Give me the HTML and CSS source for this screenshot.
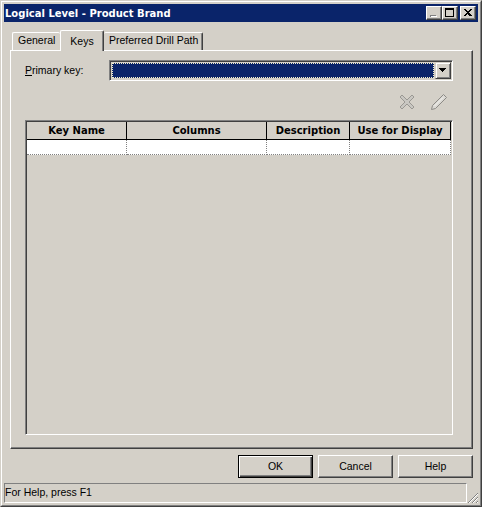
FILE: index.html
```html
<!DOCTYPE html>
<html lang="en">
<head>
    <meta charset="UTF-8">
    <title>Logical Level - Product Brand</title>
    <link rel="stylesheet" href="styles.css">
</head>
<body>
    <div class="window">
        <div class="window-inner">
            <div class="titlebar">
                <span class="title">Logical Level - Product Brand</span>
                <div class="title-buttons">
                    <div class="title-btn">
                        <svg width="14" height="12" viewBox="0 0 14 12" shape-rendering="crispEdges"><rect x="3" y="8" width="6" height="2" fill="#808080"/><rect x="4" y="9" width="6" height="1" fill="#fff"/></svg>
                    </div>
                    <div class="title-btn">
                        <svg width="14" height="12" viewBox="0 0 14 12" shape-rendering="crispEdges"><path d="M2 1h9v9H2z M3 3v6h7V3z" fill="#000" fill-rule="evenodd"/></svg>
                    </div>
                    <div class="title-btn close-btn">
                        <svg width="14" height="12" viewBox="0 0 14 12" shape-rendering="crispEdges"><path d="M3 2h2v1h1v1h2V3h1V2h2v1h-1v1H9v1H8v1h1v1h1v1h1v1H9V9H8V8H7V7H6v1H5v1H3V8h1V7h1V6h1V5H5V4H4V3H3z" fill="#000"/></svg>
                    </div>
                </div>
            </div>

            <div class="content">
                <div class="tabs">
                    <div class="tab">General</div>
                    <div class="tab active">Keys</div>
                    <div class="tab">Preferred Drill Path</div>
                </div>

                <div class="panel">
                    <div class="key-row">
                        <label class="key-label"><u>P</u>rimary key:</label>
                        <div class="combo">
                            <div class="combo-value"></div>
                            <div class="combo-arrow">
                                <svg width="9" height="5" viewBox="0 0 9 5" shape-rendering="crispEdges"><path d="M0 0h7v1H6v1H5v1H4v1H3V3H2V2H1V1H0z" fill="#000"/></svg>
                            </div>
                        </div>
                    </div>

                    <div class="toolbar">
                        <svg class="tool-icon" width="18" height="18" viewBox="0 0 18 18">
                            <path d="M2 4 L4 2 L9 7 L14 2 L16 4 L11 9 L16 14 L14 16 L9 11 L4 16 L2 14 L7 9 Z" fill="#c9c7c2" stroke="#9a9893" stroke-width="1"/>
                        </svg>
                        <svg class="tool-icon" width="18" height="18" viewBox="0 0 18 18">
                            <path d="M13.5 1.5 L16.5 4.5 L5.5 15.5 L1.5 16.5 L2.5 12.5 Z" fill="#dbd9d4" stroke="#8c8a86" stroke-width="1"/>
                            <path d="M13 4.5 L4.5 13" stroke="#f4f3f0" stroke-width="1"/>
                        </svg>
                    </div>

                    <div class="grid-box">
                        <table class="grid">
                            <thead>
                                <tr>
                                    <th class="col-name">Key Name</th>
                                    <th class="col-columns">Columns</th>
                                    <th class="col-desc">Description</th>
                                    <th class="col-display">Use for Display</th>
                                </tr>
                            </thead>
                            <tbody>
                                <tr>
                                    <td></td>
                                    <td></td>
                                    <td></td>
                                    <td></td>
                                </tr>
                            </tbody>
                        </table>
                    </div>
                </div>

                <div class="buttons">
                    <button class="btn default">OK</button>
                    <button class="btn">Cancel</button>
                    <button class="btn">Help</button>
                </div>
            </div>

            <div class="statusbar">
                <div class="status-text">For Help, press F1</div>
                <svg class="grip" width="11" height="11" viewBox="0 0 11 11">
                    <path d="M1 11 L11 1 M5 11 L11 5 M9 11 L11 9" stroke="#808080" stroke-width="1" fill="none"/>
                    <path d="M2 11 L11 2 M6 11 L11 6 M10 11 L11 10" stroke="#fff" stroke-width="1" fill="none"/>
                </svg>
            </div>
        </div>
    </div>
</body>
</html>
```

FILE: styles.css
```css
html, body {
    margin: 0;
    padding: 0;
}

body {
    width: 482px;
    height: 507px;
    overflow: hidden;
    background: #d4d0c8;
    font-family: "Liberation Sans", Arial, sans-serif;
    font-size: 10.5px;
    color: #000;
}

.window {
    box-sizing: border-box;
    width: 482px;
    height: 507px;
    border: 1px solid;
    border-color: #d4d0c8 #404040 #404040 #d4d0c8;
}

.window-inner {
    box-sizing: border-box;
    height: 100%;
    display: flex;
    flex-direction: column;
    border: 1px solid;
    border-color: #fff #808080 #808080 #fff;
    padding: 2px;
}

.titlebar {
    height: 18px;
    flex: none;
    background: #0a246a;
    display: flex;
    align-items: center;
    justify-content: space-between;
    padding: 0 2px 0 1px;
}

.title {
    color: #fff;
    font-family: "DejaVu Sans", sans-serif;
    font-weight: bold;
    font-size: 10px;
}

.title-buttons {
    display: flex;
}

.title-btn {
    box-sizing: border-box;
    width: 16px;
    height: 14px;
    background: #d4d0c8;
    border: 1px solid;
    border-color: #fff #404040 #404040 #fff;
    box-shadow: inset -1px -1px 0 #808080;
}

.title-btn svg {
    display: block;
}

.close-btn {
    margin-left: 2px;
}

.content {
    flex: 1;
    display: flex;
    flex-direction: column;
    padding: 8px 5px 0 6px;
}

.tabs {
    display: flex;
    align-items: flex-end;
    height: 20px;
    padding-left: 2px;
    position: relative;
    z-index: 1;
}

.tab {
    box-sizing: border-box;
    height: 18px;
    padding: 1px 6px 0;
    background: #d4d0c8;
    border: 1px solid;
    border-color: #fff #404040 transparent #fff;
    border-bottom: none;
    border-radius: 2px 2px 0 0;
    box-shadow: inset -1px 0 0 #808080;
    white-space: nowrap;
}

.tab:first-child {
    width: 48px;
    border-right: none;
    box-shadow: none;
    padding-left: 5px;
}

.tab.active {
    width: 44px;
    height: 21px;
    margin-bottom: -1px;
    padding: 4px 0 0;
    text-align: center;
}

.tab:last-child {
    width: 99px;
    border-left: none;
    padding-left: 5px;
}

.panel {
    box-sizing: border-box;
    height: 399px;
    display: flex;
    flex-direction: column;
    background: #d4d0c8;
    border: 1px solid;
    border-color: #fff #404040 #404040 #fff;
    box-shadow: inset -1px -1px 0 #808080;
    padding: 9px 19px 13px 14px;
}

.key-row {
    display: flex;
    align-items: center;
    height: 21px;
}

.key-label {
    width: 84px;
    flex: none;
    padding-bottom: 1px;
}

.combo {
    box-sizing: border-box;
    flex: 1;
    height: 21px;
    display: flex;
    padding: 0 1px 1px 0;
    border: 1px solid;
    border-color: #808080 #fff #fff #808080;
    box-shadow: inset 1px 1px 0 #404040;
}

.combo-value {
    flex: 1;
    margin: 2px 1px 1px 2px;
    background: #0a246a;
    outline: 1px dotted #f5f0c8;
    outline-offset: -1px;
}

.combo-arrow {
    box-sizing: border-box;
    width: 16px;
    height: 17px;
    margin-top: 1px;
    display: flex;
    align-items: center;
    justify-content: center;
    background: #d4d0c8;
    border: 1px solid;
    border-color: #d4d0c8 #404040 #404040 #d4d0c8;
    box-shadow: inset 1px 1px 0 #fff, inset -1px -1px 0 #808080;
}

.toolbar {
    height: 18px;
    margin: 12px 5px 9px 0;
    display: flex;
    justify-content: flex-end;
    gap: 14px;
    flex: none;
}

.tool-icon {
    display: block;
}

.grid-box {
    box-sizing: border-box;
    flex: 1;
    border: 1px solid;
    border-color: #808080 #fff #fff #808080;
    box-shadow: inset 1px 1px 0 #404040;
    padding: 1px 2px 0 1px;
}

.grid {
    border-collapse: separate;
    border-spacing: 0;
    table-layout: fixed;
    width: 424px;
}

.grid th {
    box-sizing: border-box;
    height: 18px;
    padding: 0;
    background: #d4d0c8;
    font-family: "DejaVu Sans", sans-serif;
    font-size: 10px;
    font-weight: bold;
    text-align: center;
    border-right: 1px solid #000;
    border-bottom: 1px solid #000;
}

.col-name {
    width: 100px;
}

.col-columns {
    width: 140px;
}

.col-desc {
    width: 83px;
}

.col-display {
    width: 101px;
}

.grid td {
    box-sizing: border-box;
    height: 15px;
    padding: 0;
    background: #fff;
    border-right: 1px dotted #808080;
    border-bottom: 1px dotted #808080;
}

.buttons {
    display: flex;
    justify-content: flex-end;
    gap: 5px;
    margin-top: 6px;
}

.btn {
    box-sizing: border-box;
    width: 75px;
    height: 23px;
    padding: 0 0 2px;
    background: #d4d0c8;
    font-family: "Liberation Sans", Arial, sans-serif;
    font-size: 10.5px;
    color: #000;
    border: 1px solid;
    border-color: #fff #404040 #404040 #fff;
    box-shadow: inset -1px -1px 0 #808080;
}

.btn.default {
    border-color: #000;
    box-shadow: inset 1px 1px 0 #fff, inset -1px -1px 0 #404040, inset -2px -2px 0 #808080;
}

.statusbar {
    height: 20px;
    margin-top: 5px;
    flex: none;
    display: flex;
    align-items: stretch;
}

.status-text {
    box-sizing: border-box;
    flex: 1;
    padding: 2px 0 0 0;
    border: 1px solid;
    border-color: #808080 #fff #fff #808080;
}

.grip {
    display: block;
    flex: none;
    align-self: flex-end;
}
```
